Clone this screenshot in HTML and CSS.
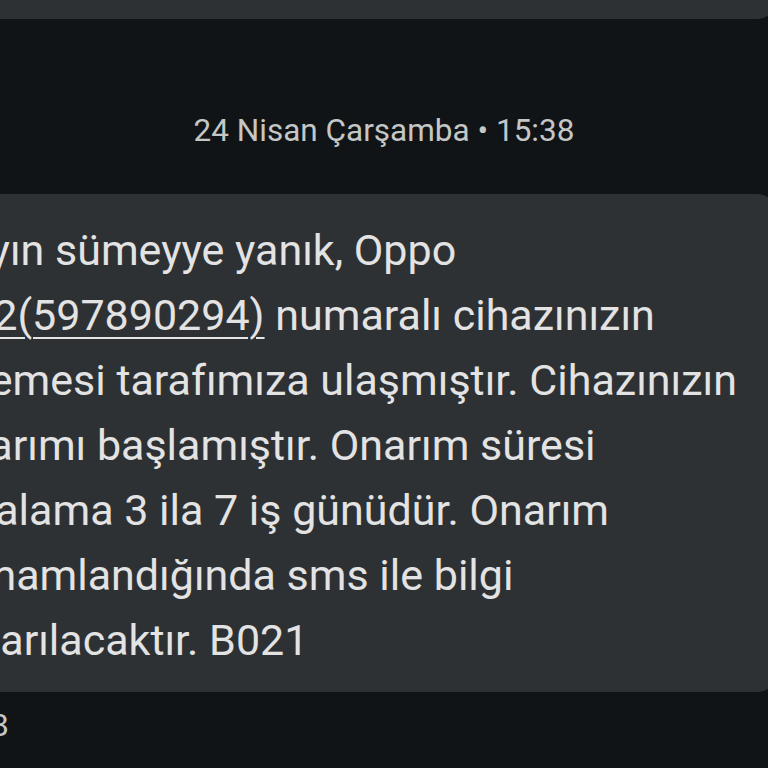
FILE: index.html
```html
<!DOCTYPE html>
<html lang="tr">
<head>
  <meta charset="UTF-8" />
  <title>Mesajlar</title>
  <link rel="stylesheet" href="styles.css">
</head>
<body>
  <div class="thread">
    <div class="bubble bubble-prev"></div>

    <div class="date-row">24 Nisan Çarşamba • 15:38</div>

    <div class="message">
      <div class="bubble">
        Sayın sümeyye yanık, Oppo<br>
        <span class="link">A52(597890294)</span> numaralı cihazınızın<br>
        ödemesi tarafımıza ulaşmıştır. Cihazınızın<br>
        onarımı başlamıştır. Onarım süresi<br>
        ortalama 3 ila 7 iş günüdür. Onarım<br>
        tamamlandığında sms ile bilgi<br>
        aktarılacaktır. B021
      </div>
      <div class="time">15:38</div>
    </div>
  </div>
</body>
</html>
```

FILE: styles.css
```css
* {
  margin: 0;
  padding: 0;
  box-sizing: border-box;
}

body {
  background: #111417;
  height: 100vh;
  overflow: hidden;
  font-family: Roboto, "Noto Sans", sans-serif;
  color: #e3e3e3;
}

/* the thread is wider than the screen: it runs off on both sides */
.thread {
  display: flex;
  flex-direction: column;
  margin-left: -59px;
  margin-right: -12px;
}

.bubble {
  background: #2e3134;
  border-radius: 24px;
}

.bubble-prev {
  margin-top: -40px;
  height: 59px;
}

.date-row {
  height: 175px;
  display: flex;
  align-items: center;
  justify-content: center;
  padding: 47px 12px 0 59px;
  font-size: 31.5px;
  color: #c4c7c5;
}

.message .bubble {
  padding: 24px 24px 32px 0;
  font-size: 43px;
  line-height: 65px;
  height: 498px;
}

.link {
  text-decoration: underline;
  text-decoration-thickness: 2px;
  text-underline-offset: 7px;
}

.time {
  margin-left: -12px;
  padding-top: 14px;
  font-size: 32px;
  color: #c4c7c5;
}
```
